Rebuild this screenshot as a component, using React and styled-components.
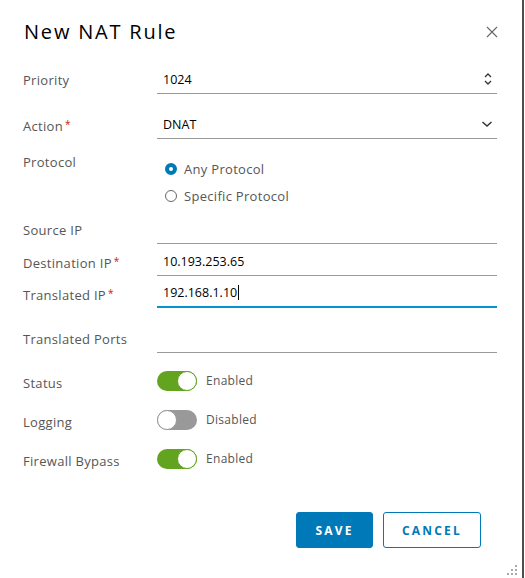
import React from "react";
import styled, { createGlobalStyle } from "styled-components";

const Global = createGlobalStyle`
  html, body { margin: 0; padding: 0; background: #fff; }
  body { font-family: "Open Sans", "Liberation Sans", sans-serif; }
  * { box-sizing: border-box; }
`;

const Dialog = styled.div`
  position: relative;
  width: 524px;
  height: 578px;
  background: #fff;
  border-right: 2px solid #4d4d4d;
  display: flex;
  flex-direction: column;
`;

const Header = styled.div`
  display: flex;
  align-items: center;
  justify-content: space-between;
  padding: 17px 24px 0 24px;
  height: 46px;
`;

const Title = styled.h1`
  margin: 0;
  font-weight: 400;
  font-size: 20px;
  letter-spacing: 1.8px;
  color: #000;
`;

const CloseBtn = styled.button`
  border: 0;
  background: none;
  padding: 0;
  width: 12px;
  height: 12px;
  display: flex;
`;

const Form = styled.div`
  display: flex;
  flex-direction: column;
  padding: 0 0 0 23px;
`;

const Row = styled.div`
  display: grid;
  grid-template-columns: 134px 340px;
  align-items: ${(p) => p.$align || "center"};
  margin-top: ${(p) => p.$top}px;
`;

const Label = styled.div`
  font-size: 13px;
  line-height: 16px;
  color: #565656;
  letter-spacing: 0.3px;
  padding-top: ${(p) => p.$pt || 0}px;
`;

const Req = styled.span`
  color: #c92100;
  font-size: 10px;
  margin-left: 2px;
  vertical-align: 3px;
`;

const Field = styled.div`
  height: 29px;
  display: flex;
  align-items: center;
  justify-content: space-between;
  padding: 0 4px 0 6px;
  border-bottom: ${(p) => (p.$focus ? "2px solid #0094d2" : "1px solid #9a9a9a")};
  font-size: 12.5px;
  color: #000;
`;

const Value = styled.span`
  display: inline-flex;
  align-items: center;
`;

const Caret = styled.span`
  display: inline-block;
  width: 1px;
  height: 15px;
  background: #000;
  margin-left: 1px;
`;

const Radios = styled.div`
  display: flex;
  flex-direction: column;
  gap: 9px;
  padding: 7px 0 0 8px;
`;

const RadioRow = styled.label`
  display: flex;
  align-items: center;
  gap: 7px;
  font-size: 13px;
  color: #565656;
  letter-spacing: 0.3px;
  height: 18px;
`;

const RadioDot = styled.span`
  width: 12px;
  height: 12px;
  border-radius: 50%;
  border: ${(p) => (p.$on ? "4px solid #0079b8" : "1px solid #666")};
  background: #fff;
`;

const ToggleWrap = styled.div`
  display: flex;
  align-items: center;
  gap: 9px;
  height: 20px;
`;

const Track = styled.span`
  width: 40px;
  height: 20px;
  border-radius: 10px;
  background: ${(p) => (p.$on ? "#62a420" : "#999")};
  display: flex;
  justify-content: ${(p) => (p.$on ? "flex-end" : "flex-start")};
  align-items: center;
`;

const Knob = styled.span`
  width: 20px;
  height: 20px;
  border-radius: 50%;
  background: #fff;
  border: 1px solid ${(p) => (p.$on ? "#62a420" : "#999")};
`;

const ToggleText = styled.span`
  font-size: 12px;
  color: #565656;
  letter-spacing: 0.3px;
  margin-top: -1px;
`;

const Footer = styled.div`
  display: flex;
  justify-content: flex-end;
  gap: 10px;
  padding: 0 41px 0 0;
  margin-top: 43px;
`;

const Button = styled.button`
  height: 36px;
  width: ${(p) => p.$w}px;
  border-radius: 3px;
  border: 1px solid #0079b8;
  background: ${(p) => (p.$primary ? "#0079b8" : "#fff")};
  color: ${(p) => (p.$primary ? "#fff" : "#0079b8")};
  font-family: "Open Sans", sans-serif;
  font-weight: 700;
  font-size: 12px;
  letter-spacing: 2.2px;
  padding: 0;
`;

const Grip = styled.svg`
  position: absolute;
  right: 3px;
  bottom: 1px;
`;

const Toggle = ({ on, text }) => (
  <ToggleWrap>
    <Track $on={on}>
      <Knob $on={on} />
    </Track>
    <ToggleText>{text}</ToggleText>
  </ToggleWrap>
);

export default function App() {
  return (
    <>
      <Global />
      <Dialog>
        <Header>
          <Title>New NAT Rule</Title>
          <CloseBtn aria-label="close">
            <svg width="12" height="12" viewBox="0 0 12 12">
              <path d="M1 1 L11 11 M11 1 L1 11" stroke="#666" strokeWidth="1.1" fill="none" />
            </svg>
          </CloseBtn>
        </Header>
        <Form>
          <Row $top={19}>
            <Label>Priority</Label>
            <Field>
              <Value>1024</Value>
              <svg width="10" height="14" viewBox="0 0 10 14">
                <path d="M2 5 L5 2 L8 5 M2 9 L5 12 L8 9" stroke="#333" strokeWidth="1.3" fill="none" />
              </svg>
            </Field>
          </Row>
          <Row $top={16}>
            <Label>
              Action<Req>*</Req>
            </Label>
            <Field>
              <Value>DNAT</Value>
              <svg width="12" height="10" viewBox="0 0 12 10">
                <path d="M1.5 3 L6 7 L10.5 3" stroke="#333" strokeWidth="1.5" fill="none" />
              </svg>
            </Field>
          </Row>
          <Row $top={14} $align="start">
            <Label $pt={1}>Protocol</Label>
            <Radios>
              <RadioRow>
                <RadioDot $on />
                Any Protocol
              </RadioRow>
              <RadioRow>
                <RadioDot />
                Specific Protocol
              </RadioRow>
            </Radios>
          </Row>
          <Row $top={10}>
            <Label>Source IP</Label>
            <Field />
          </Row>
          <Row $top={3}>
            <Label>
              Destination IP<Req>*</Req>
            </Label>
            <Field>
              <Value>10.193.253.65</Value>
            </Field>
          </Row>
          <Row $top={3}>
            <Label>
              Translated IP<Req>*</Req>
            </Label>
            <Field $focus>
              <Value>
                192.168.1.10
                <Caret />
              </Value>
            </Field>
          </Row>
          <Row $top={16}>
            <Label>Translated Ports</Label>
            <Field />
          </Row>
          <Row $top={18}>
            <Label $pt={4}>Status</Label>
            <Toggle on text="Enabled" />
          </Row>
          <Row $top={19}>
            <Label $pt={4}>Logging</Label>
            <Toggle text="Disabled" />
          </Row>
          <Row $top={19}>
            <Label $pt={4}>Firewall Bypass</Label>
            <Toggle on text="Enabled" />
          </Row>
        </Form>
        <Footer>
          <Button $primary $w={77}>SAVE</Button>
          <Button $w={98}>CANCEL</Button>
        </Footer>
        <Grip width="12" height="12" viewBox="0 0 12 12">
          <g fill="#aaa">
            <rect x="8" y="0" width="2" height="2" />
            <rect x="4" y="4" width="2" height="2" />
            <rect x="8" y="4" width="2" height="2" />
            <rect x="0" y="8" width="2" height="2" />
            <rect x="4" y="8" width="2" height="2" />
            <rect x="8" y="8" width="2" height="2" />
          </g>
        </Grip>
      </Dialog>
    </>
  );
}
